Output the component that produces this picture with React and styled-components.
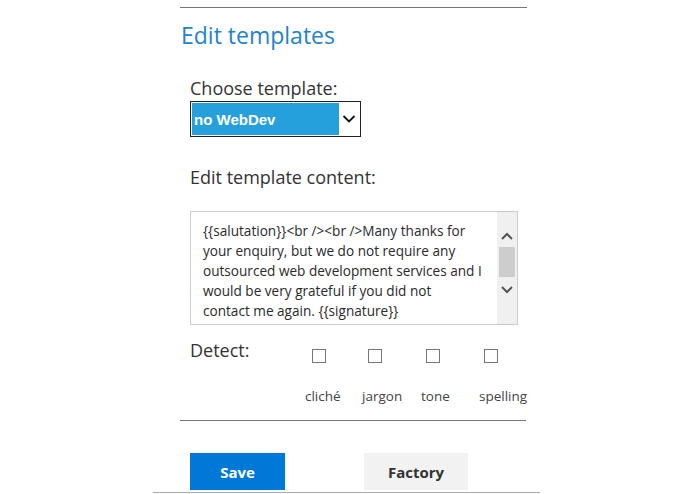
import styled, { createGlobalStyle } from 'styled-components';

const GlobalStyle = createGlobalStyle`
  html, body {
    margin: 0;
    padding: 0;
    background: #fff;
  }
  body {
    font-family: "Open Sans", "Noto Sans", sans-serif;
    color: #333;
  }
`;

const Page = styled.div`
  width: 695px;
  height: 494px;
  padding-top: 7px;
  padding-left: 153px;
  box-sizing: border-box;
  overflow: hidden;
`;

const Panel = styled.section`
  margin-left: 27px;
  width: 347px;
  border-top: 1px solid #777;
`;

const Heading = styled.h2`
  margin: 12px 0 0 1px;
  font-size: 23px;
  font-weight: 400;
  line-height: 30px;
  color: #1f82d0;
`;

const Form = styled.div`
  padding-left: 10px;
`;

const FieldLabel = styled.div`
  font-size: 18px;
  line-height: 24px;
  color: #333;
  margin-top: ${(p) => p.$top}px;
`;

const Select = styled.div`
  display: flex;
  width: 171px;
  height: 36px;
  margin-top: 1px;
  box-sizing: border-box;
  border: 1px solid #222;
  padding: 1px;
  background: #fff;
`;

const SelectValue = styled.div`
  flex: 1;
  background: #26a0dc;
  color: #fff;
  font-family: "Liberation Sans", Arial, sans-serif;
  font-size: 15px;
  font-weight: 600;
  display: flex;
  align-items: center;
  padding-left: 2px;
`;

const SelectArrow = styled.div`
  width: 20px;
  display: flex;
  align-items: center;
  justify-content: center;
`;

const TextBox = styled.div`
  margin-top: 22px;
  width: 328px;
  height: 114px;
  box-sizing: border-box;
  border: 1px solid #ccc;
  display: flex;
`;

const TextContent = styled.div`
  flex: 1;
  padding: 9px 0 0 12px;
  font-size: 13.6px;
  line-height: 20px;
  color: #2a2a2a;
  white-space: nowrap;
  overflow: hidden;
`;

const Scrollbar = styled.div`
  width: 20px;
  background: #f0f0f0;
  display: flex;
  flex-direction: column;
  align-items: center;
  padding-top: 19px;
`;

const Thumb = styled.div`
  width: 16px;
  height: 30px;
  margin: 6px 0 8px;
  background: #cdcdcd;
`;

const DetectGrid = styled.div`
  display: grid;
  grid-template-columns: 115px 57px 59px 58px 50px;
  margin-top: 13px;
`;

const DetectLabel = styled.div`
  font-size: 18px;
  line-height: 24px;
  color: #333;
`;

const Box = styled.span`
  display: block;
  width: 14px;
  height: 14px;
  box-sizing: border-box;
  border: 1px solid #777;
  margin: 11px 0 0 ${(p) => p.$left}px;
`;

const OptionName = styled.div`
  font-size: 13.5px;
  line-height: 20px;
  color: #444;
  margin-top: 23px;
  white-space: nowrap;
`;

const Divider = styled.div`
  margin-top: 14px;
  margin-left: -10px;
  width: 346px;
  border-top: 1px solid #777;
`;

const Buttons = styled.div`
  display: flex;
  gap: 79px;
  margin-top: 32px;
`;

const Button = styled.button`
  width: ${(p) => p.$width}px;
  height: 37px;
  border: none;
  padding: 0;
  font-family: "Open Sans", "Noto Sans", sans-serif;
  font-size: 15px;
  font-weight: 700;
  background: ${(p) => (p.$primary ? '#0078d7' : '#f2f2f2')};
  color: ${(p) => (p.$primary ? '#fff' : '#333')};
`;

const BottomLine = styled.div`
  margin-top: 2px;
  margin-left: -27px;
  width: 387px;
  border-top: 1px solid #aaa;
`;

const Chevron = ({ up }) => (
  <svg width="14" height="10" viewBox="0 0 14 10">
    <path
      d={up ? 'M2 8 L7 3 L12 8' : 'M2 2 L7 7 L12 2'}
      fill="none"
      stroke="#555"
      strokeWidth="2"
    />
  </svg>
);

const lines = [
  '{{salutation}}<br /><br />Many thanks for',
  'your enquiry, but we do not require any',
  'outsourced web development services and I',
  'would be very grateful if you did not',
  'contact me again. {{signature}}',
];

const options = [
  { name: 'cliché', left: 7 },
  { name: 'jargon', left: 6 },
  { name: 'tone', left: 5 },
  { name: 'spelling', left: 5 },
];

const App = () => (
  <Page>
    <GlobalStyle />
    <Panel>
      <Heading>Edit templates</Heading>
      <Form>
        <FieldLabel $top={26}>Choose template:</FieldLabel>
        <Select>
          <SelectValue>no WebDev</SelectValue>
          <SelectArrow>
            <svg width="14" height="10" viewBox="0 0 14 10">
              <path d="M1.5 2 L7 7.5 L12.5 2" fill="none" stroke="#111" strokeWidth="1.8" />
            </svg>
          </SelectArrow>
        </Select>
        <FieldLabel $top={28}>Edit template content:</FieldLabel>
        <TextBox>
          <TextContent>
            {lines.map((l) => (
              <div key={l}>{l}</div>
            ))}
          </TextContent>
          <Scrollbar>
            <Chevron up />
            <Thumb />
            <Chevron />
          </Scrollbar>
        </TextBox>
        <DetectGrid>
          <DetectLabel>Detect:</DetectLabel>
          {options.map((o) => (
            <div key={o.name}>
              <Box $left={o.left} />
            </div>
          ))}
          <div />
          {options.map((o) => (
            <OptionName key={o.name}>{o.name}</OptionName>
          ))}
        </DetectGrid>
        <Divider />
        <Buttons>
          <Button $primary $width={95}>Save</Button>
          <Button $width={104}>Factory</Button>
        </Buttons>
      </Form>
      <BottomLine />
    </Panel>
  </Page>
);

export default App;
